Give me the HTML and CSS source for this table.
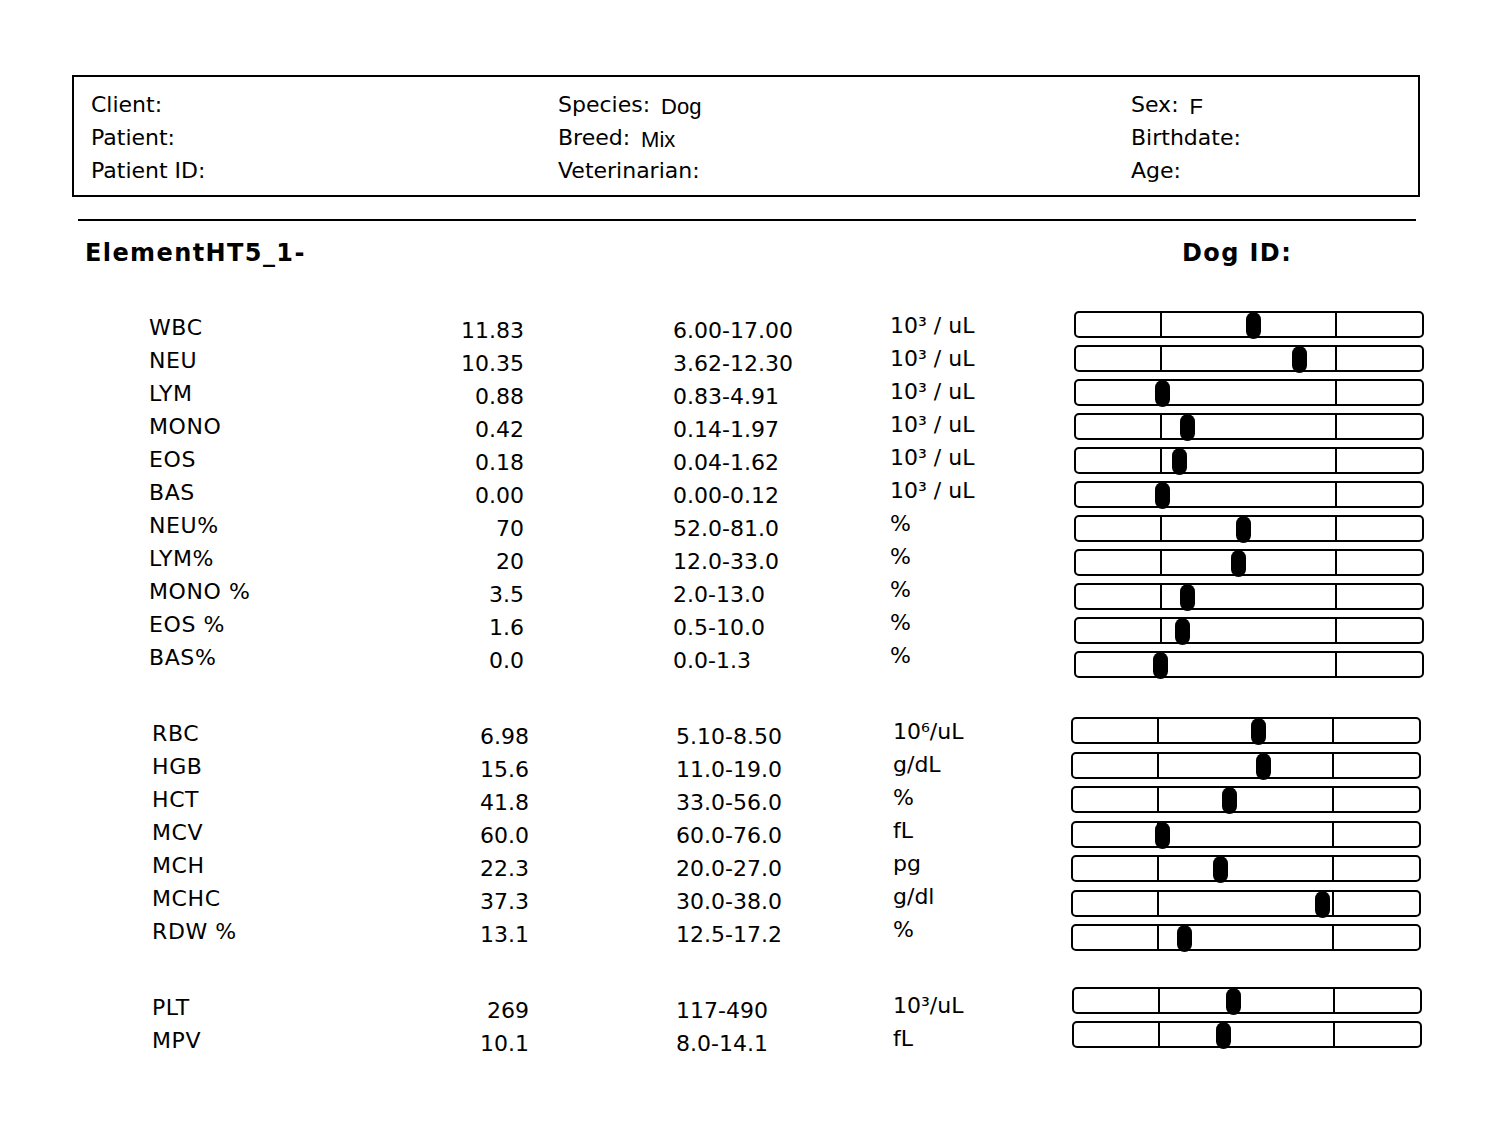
FILE: index.html
```html
<!DOCTYPE html>
<html lang="en">
  <head>
    <meta charset="UTF-8" />
    <meta name="viewport" content="width=device-width, initial-scale=1.0" />
    <title>ElementHT5 Report</title>
    <link rel="stylesheet" href="styles.css">
  </head>
  <body>
    <div class="sheet">
      <!-- Patient info box -->
      <div class="info">
        <div class="info-col">
          <div>Client:</div>
          <div>Patient:</div>
          <div>Patient ID:</div>
        </div>
        <div class="info-col">
          <div>Species: <span class="val">Dog</span></div>
          <div>Breed: <span class="val">Mix</span></div>
          <div>Veterinarian:</div>
        </div>
        <div class="info-col">
          <div>Sex: <span class="val">F</span></div>
          <div>Birthdate:</div>
          <div>Age:</div>
        </div>
      </div>

      <hr class="rule">

      <div class="title-row">
        <h1 class="title">ElementHT5_1-</h1>
        <h1 class="title">Dog ID:</h1>
      </div>

      <!-- White cells -->
      <div class="group">
        <div class="rows">
          <div class="row"><span class="name">WBC</span><span class="num">11.83</span><span class="range">6.00-17.00</span><span class="unit">10³ / uL</span></div>
          <div class="row"><span class="name">NEU</span><span class="num">10.35</span><span class="range">3.62-12.30</span><span class="unit">10³ / uL</span></div>
          <div class="row"><span class="name">LYM</span><span class="num">0.88</span><span class="range">0.83-4.91</span><span class="unit">10³ / uL</span></div>
          <div class="row"><span class="name">MONO</span><span class="num">0.42</span><span class="range">0.14-1.97</span><span class="unit">10³ / uL</span></div>
          <div class="row"><span class="name">EOS</span><span class="num">0.18</span><span class="range">0.04-1.62</span><span class="unit">10³ / uL</span></div>
          <div class="row"><span class="name">BAS</span><span class="num">0.00</span><span class="range">0.00-0.12</span><span class="unit">10³ / uL</span></div>
          <div class="row"><span class="name">NEU%</span><span class="num">70</span><span class="range">52.0-81.0</span><span class="unit">%</span></div>
          <div class="row"><span class="name">LYM%</span><span class="num">20</span><span class="range">12.0-33.0</span><span class="unit">%</span></div>
          <div class="row"><span class="name">MONO %</span><span class="num">3.5</span><span class="range">2.0-13.0</span><span class="unit">%</span></div>
          <div class="row"><span class="name">EOS %</span><span class="num">1.6</span><span class="range">0.5-10.0</span><span class="unit">%</span></div>
          <div class="row"><span class="name">BAS%</span><span class="num">0.0</span><span class="range">0.0-1.3</span><span class="unit">%</span></div>
        </div>
        <div class="bars">
          <div class="bar"><i></i><i></i><i></i><b style="left:178px"></b></div>
          <div class="bar"><i></i><i></i><i></i><b style="left:224px"></b></div>
          <div class="bar"><i></i><i></i><i></i><b style="left:87px"></b></div>
          <div class="bar"><i></i><i></i><i></i><b style="left:112px"></b></div>
          <div class="bar"><i></i><i></i><i></i><b style="left:104px"></b></div>
          <div class="bar"><i></i><i></i><i></i><b style="left:87px"></b></div>
          <div class="bar"><i></i><i></i><i></i><b style="left:168px"></b></div>
          <div class="bar"><i></i><i></i><i></i><b style="left:163px"></b></div>
          <div class="bar"><i></i><i></i><i></i><b style="left:112px"></b></div>
          <div class="bar"><i></i><i></i><i></i><b style="left:107px"></b></div>
          <div class="bar"><i></i><i></i><i></i><b style="left:85px"></b></div>
        </div>
      </div>

      <!-- Red cells -->
      <div class="group red">
        <div class="rows">
          <div class="row"><span class="name">RBC</span><span class="num">6.98</span><span class="range">5.10-8.50</span><span class="unit">10⁶/uL</span></div>
          <div class="row"><span class="name">HGB</span><span class="num">15.6</span><span class="range">11.0-19.0</span><span class="unit">g/dL</span></div>
          <div class="row"><span class="name">HCT</span><span class="num">41.8</span><span class="range">33.0-56.0</span><span class="unit">%</span></div>
          <div class="row"><span class="name">MCV</span><span class="num">60.0</span><span class="range">60.0-76.0</span><span class="unit">fL</span></div>
          <div class="row"><span class="name">MCH</span><span class="num">22.3</span><span class="range">20.0-27.0</span><span class="unit">pg</span></div>
          <div class="row"><span class="name">MCHC</span><span class="num">37.3</span><span class="range">30.0-38.0</span><span class="unit">g/dl</span></div>
          <div class="row"><span class="name">RDW %</span><span class="num">13.1</span><span class="range">12.5-17.2</span><span class="unit">%</span></div>
        </div>
        <div class="bars">
          <div class="bar"><i></i><i></i><i></i><b style="left:186px"></b></div>
          <div class="bar"><i></i><i></i><i></i><b style="left:191px"></b></div>
          <div class="bar"><i></i><i></i><i></i><b style="left:157px"></b></div>
          <div class="bar"><i></i><i></i><i></i><b style="left:90px"></b></div>
          <div class="bar"><i></i><i></i><i></i><b style="left:148px"></b></div>
          <div class="bar"><i></i><i></i><i></i><b style="left:250px"></b></div>
          <div class="bar"><i></i><i></i><i></i><b style="left:112px"></b></div>
        </div>
      </div>

      <!-- Platelets -->
      <div class="group plt">
        <div class="rows">
          <div class="row"><span class="name">PLT</span><span class="num">269</span><span class="range">117-490</span><span class="unit">10³/uL</span></div>
          <div class="row"><span class="name">MPV</span><span class="num">10.1</span><span class="range">8.0-14.1</span><span class="unit">fL</span></div>
        </div>
        <div class="bars">
          <div class="bar"><i></i><i></i><i></i><b style="left:160px"></b></div>
          <div class="bar"><i></i><i></i><i></i><b style="left:150px"></b></div>
        </div>
      </div>
    </div>
  </body>
</html>
```

FILE: styles.css
```css
body {
  margin: 0;
  background: #fff;
  color: #000;
  font-family: "DejaVu Sans", "Open Sans", sans-serif;
  font-size: 22px;
}

.sheet {
  width: 1348px;
  padding: 75px 0 60px 72px;
}

/* patient box */
.info {
  display: grid;
  grid-template-columns: 467px 573px 1fr;
  border: 2px solid #000;
  padding: 11px 0 8px 17px;
  line-height: 33px;
}

.info .val {
  margin-left: 4px;
  font-family: "Liberation Sans", Arial, sans-serif;
  line-height: 1;
  vertical-align: -2px;
}

.rule {
  width: 1338px;
  margin: 22px 0 0 6px;
  border: none;
  border-top: 2px solid #000;
}

.title-row {
  display: grid;
  grid-template-columns: 1097px 1fr;
  padding-left: 13px;
  margin-top: 16px;
}

.title {
  margin: 0;
  font-size: 24px;
  font-weight: 700;
  line-height: 33px;
  letter-spacing: 1.4px;
}

/* results */
.group {
  display: flex;
  margin: 41px 0 0 77px;
}

.rows {
  flex-shrink: 0;
  width: 925px;
}

.row {
  display: flex;
  height: 33px;
  line-height: 33px;
}

.name {
  width: 200px;
  letter-spacing: 0.6px;
}

.num {
  width: 175px;
  text-align: right;
  padding-top: 3px;
}

.range {
  width: 217px;
  margin-left: 149px;
  padding-top: 3px;
}

.unit {
  margin-top: -2px;
}

.red .name,
.plt .name {
  padding-left: 3px;
}

.red .num,
.plt .num {
  width: 177px;
}

.red .range,
.plt .range {
  margin-left: 147px;
}

.red {
  margin-top: 39px;
}

.plt {
  margin-top: 40px;
}

.bars {
  display: flex;
  flex-direction: column;
  flex-shrink: 0;
  gap: 7px;
}

.red .bars {
  gap: 7.5px;
  margin-left: -3px;
}

.plt .bars {
  margin-left: -2px;
  margin-top: -4px;
}

.bar {
  position: relative;
  display: grid;
  grid-template-columns: 84px 177px 1fr;
  width: 350px;
  height: 27px;
  box-sizing: border-box;
  border: 2px solid #000;
  border-radius: 5px;
}

.bar i:nth-child(2) {
  border-left: 2px solid #000;
  border-right: 2px solid #000;
}

.bar b {
  position: absolute;
  top: -1px;
  width: 15px;
  height: 27px;
  margin-left: -8px;
  background: #000;
  border-radius: 8px;
}
```
